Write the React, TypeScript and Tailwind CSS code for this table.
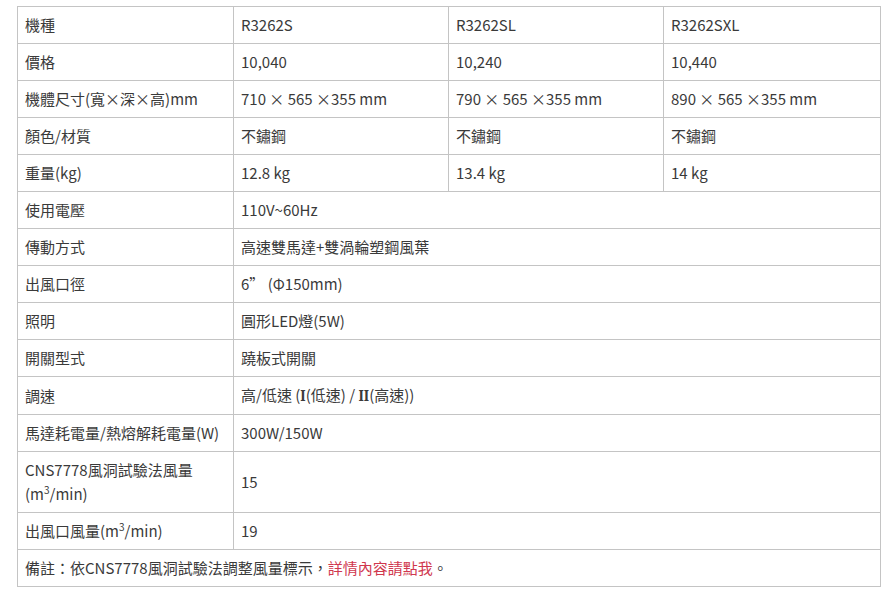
const MODELS = ["R3262S", "R3262SL", "R3262SXL"];

type Row = { label: React.ReactNode; values: React.ReactNode[] };

const sup3 = <span className="relative -top-[6px] text-[10px] leading-none">3</span>;

const ROWS: Row[] = [
  { label: "機種", values: MODELS },
  { label: "價格", values: ["10,040", "10,240", "10,440"] },
  {
    label: "機體尺寸(寬×深×高)mm",
    values: ["710 × 565 ×355 mm", "790 × 565 ×355 mm", "890 × 565 ×355 mm"],
  },
  { label: "顏色/材質", values: ["不鏽鋼", "不鏽鋼", "不鏽鋼"] },
  { label: "重量(kg)", values: ["12.8 kg", "13.4 kg", "14 kg"] },
  { label: "使用電壓", values: ["110V~60Hz"] },
  { label: "傳動方式", values: ["高速雙馬達+雙渦輪塑鋼風葉"] },
  { label: "出風口徑", values: ["6” (Φ150mm)"] },
  { label: "照明", values: ["圓形LED燈(5W)"] },
  { label: "開關型式", values: ["蹺板式開關"] },
  {
    label: "調速",
    values: [
      <>
        高/低速 (<span className="font-serif font-bold">I</span>(低速) /{" "}
        <span className="font-serif font-bold">II</span>(高速))
      </>,
    ],
  },
  { label: "馬達耗電量/熱熔解耗電量(W)", values: ["300W/150W"] },
  {
    label: (
      <>
        CNS7778風洞試驗法風量
        <br />
        (m{sup3}/min)
      </>
    ),
    values: ["15"],
  },
  {
    label: <>出風口風量(m{sup3}/min)</>,
    values: ["19"],
  },
];

const cell = "border border-[#c4c4c4] px-[7px] py-[6px] align-middle text-left font-normal";

export default function App() {
  return (
    <div
      className="pl-[17px] pt-[6px] text-[15px] leading-[24px] text-[#3a3a3a]"
      style={{ fontFamily: '"Noto Sans CJK TC", "Noto Sans", sans-serif' }}
    >
      <table className="w-[863px] table-fixed border-collapse">
        <colgroup>
          <col className="w-[216px]" />
          <col className="w-[215px]" />
          <col className="w-[215px]" />
          <col className="w-[217px]" />
        </colgroup>
        <tbody>
          {ROWS.map((row, i) => (
            <tr key={i} className="h-[37px]">
              <td className={cell}>{row.label}</td>
              {row.values.length === 1 ? (
                <td className={cell} colSpan={3}>
                  {row.values[0]}
                </td>
              ) : (
                row.values.map((v, j) => (
                  <td key={j} className={cell}>
                    {v}
                  </td>
                ))
              )}
            </tr>
          ))}
          <tr className="h-[37px]">
            <td className={cell} colSpan={4}>
              備註：依CNS7778風洞試驗法調整風量標示，
              <a className="text-[#d0384e]">詳情內容請點我</a>。
            </td>
          </tr>
        </tbody>
      </table>
    </div>
  );
}
